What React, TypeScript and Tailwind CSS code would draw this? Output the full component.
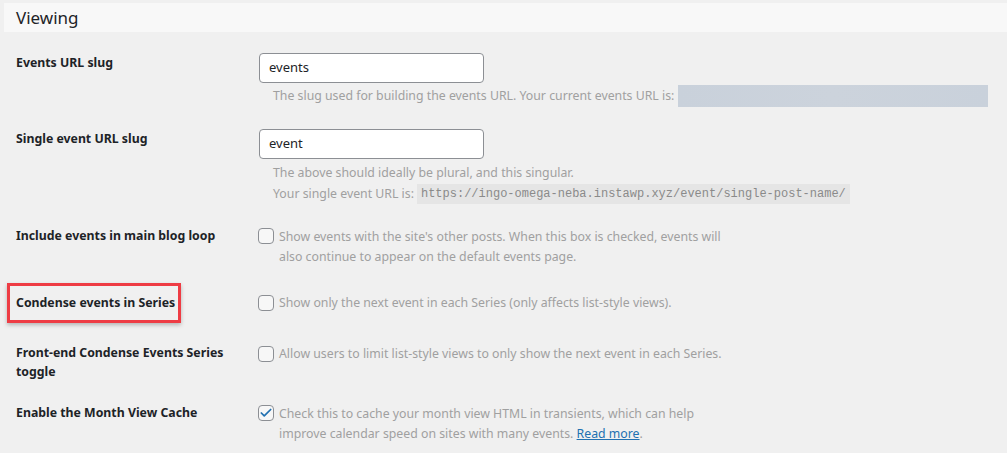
import { Check } from "lucide-react";

const font = { fontFamily: '"Noto Sans", "Open Sans", sans-serif' };

function Checkbox({ checked = false }: { checked?: boolean }) {
  return (
    <span className="mt-[1px] flex h-4 w-4 shrink-0 items-center justify-center rounded-[4px] border border-[#8c8f94] bg-[#f7f7f7]">
      {checked && <Check className="h-3.5 w-3.5 text-[#2271b1]" strokeWidth={3} />}
    </span>
  );
}

export default function App() {
  return (
    <div className="h-[453px] w-[1007px] overflow-hidden bg-[#f0f0f0] pt-[3px] text-[12.3px] text-[#1d2327]" style={font}>
      {/* Section header */}
      <div className="ml-[4px] h-[29px] bg-[#f8f8f8] pl-[12px] text-[17px] leading-[29px] text-[#1d2327]">Viewing</div>

      {/* Events URL slug */}
      <div className="flex pt-[21px]">
        <div className="w-[259px] shrink-0 pl-[16px] pt-[1px] font-bold leading-[18px]">Events URL slug</div>
        <div>
          <div className="flex h-[30px] w-[225px] items-center rounded-[4px] border border-[#8c8f94] bg-white px-[9px] text-[13px]">events</div>
          <div className="mt-[2px] flex items-center whitespace-nowrap pl-[14px] text-[#a0a0a0]">
            <span>The slug used for building the events URL. Your current events URL is:</span>
            <span className="ml-[4px] h-[22px] w-[310px] bg-gradient-to-r from-[#c9d1db] via-[#ccd3dc] to-[#c9d1db]" />
          </div>
        </div>
      </div>

      {/* Single event URL slug */}
      <div className="flex pt-[22px]">
        <div className="w-[259px] shrink-0 pl-[16px] pt-[1px] font-bold leading-[18px]">Single event URL slug</div>
        <div>
          <div className="flex h-[30px] w-[225px] items-center rounded-[4px] border border-[#8c8f94] bg-white px-[9px] text-[13px]">event</div>
          <div className="mt-[3px] pl-[14px] leading-[21px] text-[#a0a0a0]">
            <div>The above should ideally be plural, and this singular.</div>
            <div className="flex items-center whitespace-nowrap">
              <span>Your single event URL is:</span>
              <code className="ml-[3px] bg-[#e5e5e5] px-[4px] text-[12px] leading-[20px] text-[#8a8a8a]" style={{ fontFamily: '"Liberation Mono", monospace' }}>
                https://ingo-omega-neba.instawp.xyz/event/single-post-name/
              </code>
            </div>
          </div>
        </div>
      </div>

      {/* Include events in main blog loop */}
      <div className="flex pt-[23px]">
        <div className="w-[258px] shrink-0 pl-[16px] font-bold leading-[18px]">Include events in main blog loop</div>
        <div className="flex gap-[5px]">
          <Checkbox />
          <div className="w-[450px] leading-[20px] text-[#a0a0a0]">
            Show events with the site's other posts. When this box is checked, events will also continue to appear on the default events page.
          </div>
        </div>
      </div>

      {/* Condense events in Series */}
      <div className="flex items-center pt-[16px]">
        <div className="w-[258px] shrink-0 pl-[7px]">
          <div className="flex h-[40px] w-[174px] items-center whitespace-nowrap border-[3px] border-[#ee3c44] pl-[6px] font-bold shadow-[0_2px_4px_rgba(0,0,0,0.25)]">
            Condense events in Series
          </div>
        </div>
        <div className="flex gap-[5px]">
          <Checkbox />
          <div className="leading-[18px] text-[#a0a0a0]">Show only the next event in each Series (only affects list-style views).</div>
        </div>
      </div>

      {/* Front-end toggle */}
      <div className="flex pt-[20px]">
        <div className="w-[258px] shrink-0 pl-[16px] font-bold leading-[19px]">
          Front-end Condense Events Series
          <br />
          toggle
        </div>
        <div className="flex gap-[5px] pt-[2px]">
          <Checkbox />
          <div className="leading-[18px] text-[#a0a0a0]">Allow users to limit list-style views to only show the next event in each Series.</div>
        </div>
      </div>

      {/* Month view cache */}
      <div className="flex pt-[23px]">
        <div className="w-[258px] shrink-0 pl-[16px] font-bold leading-[18px]">Enable the Month View Cache</div>
        <div className="flex gap-[5px]">
          <Checkbox checked />
          <div className="w-[420px] leading-[20px] text-[#a0a0a0]">
            Check this to cache your month view HTML in transients, which can help improve calendar speed on sites with many events.{" "}
            <a className="text-[#2271b1] underline">Read more</a>.
          </div>
        </div>
      </div>
    </div>
  );
}
